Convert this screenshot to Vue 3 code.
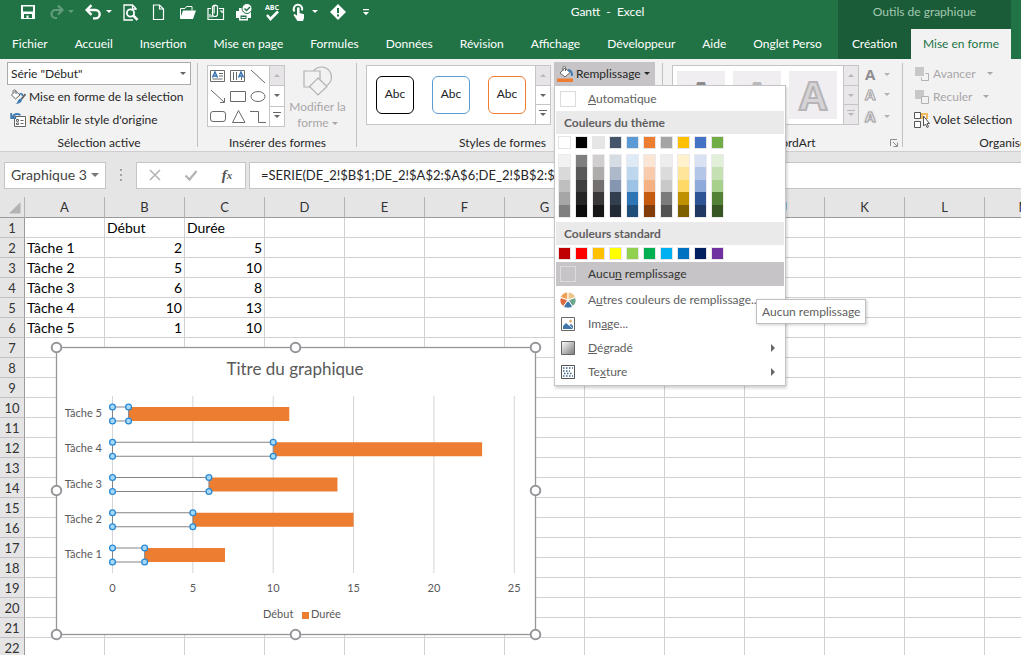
<script setup>
import { ref } from 'vue'

const tabs = ['Fichier', 'Accueil', 'Insertion', 'Mise en page', 'Formules', 'Données', 'Révision', 'Affichage', 'Développeur', 'Aide', 'Onglet Perso']

const formula = ref('=SERIE(DE_2!$B$1;DE_2!$A$2:$A$6;DE_2!$B$2:$B$6;1)')
const nameBox = ref('Graphique 3')
const element = ref('Série "Début"')

const columns = ['A', 'B', 'C', 'D', 'E', 'F', 'G', 'H', 'I', 'J', 'K', 'L', 'M']
const tasks = [
  { name: 'Tâche 1', start: 2, length: 5 },
  { name: 'Tâche 2', start: 5, length: 10 },
  { name: 'Tâche 3', start: 6, length: 8 },
  { name: 'Tâche 4', start: 10, length: 13 },
  { name: 'Tâche 5', start: 1, length: 10 }
]
const rows = Array.from({ length: 24 }, (_, i) => {
  if (i === 0) return ['', 'Début', 'Durée']
  const t = tasks[i - 1]
  return t ? [t.name, t.start, t.length] : []
})

const themeColors = ['#ffffff', '#000000', '#e7e6e6', '#44546a', '#5b9bd5', '#ed7d31', '#a5a5a5', '#ffc000', '#4472c4', '#70ad47']
const shades = [
  ['#f2f2f2', '#d9d9d9', '#bfbfbf', '#a6a6a6', '#7f7f7f'],
  ['#7f7f7f', '#595959', '#3f3f3f', '#262626', '#0c0c0c'],
  ['#d0cece', '#aeabab', '#757070', '#3a3838', '#171616'],
  ['#d6dce4', '#adb9ca', '#8496b0', '#323f4f', '#222a35'],
  ['#deebf6', '#bdd7ee', '#9cc3e5', '#2e75b5', '#1e4e79'],
  ['#fbe5d5', '#f7cbac', '#f4b183', '#c55a11', '#833c0b'],
  ['#ededed', '#dbdbdb', '#c9c9c9', '#7b7b7b', '#525252'],
  ['#fff2cc', '#fee599', '#ffd965', '#bf9000', '#7f6000'],
  ['#d9e2f3', '#b4c6e7', '#8eaadb', '#2f5496', '#1f3864'],
  ['#e2efd9', '#c5e0b3', '#a8d08d', '#538135', '#375623']
]
const standardColors = ['#c00000', '#ff0000', '#ffc000', '#ffff00', '#92d050', '#00b050', '#00b0f0', '#0070c0', '#002060', '#7030a0']

const plot = { left: 66.5, unit: 16.07, top: 59, bottom: 236, step: 35.25, first: 218 }
const px = v => plot.left + v * plot.unit
const bars = tasks.map((t, i) => ({
  ...t,
  y: plot.first - i * plot.step,
  x0: px(0),
  x1: px(t.start),
  x2: px(t.start + t.length)
}))
const ticks = [0, 5, 10, 15, 20, 25]
const grips = [[10.5, 10.5], [249.5, 10.5], [489.5, 10.5], [10.5, 153.5], [489.5, 153.5], [10.5, 297.5], [249.5, 297.5], [489.5, 297.5]]
</script>

<template>
  <div class="app">
    <header class="top">
      <div class="titlebar">
        <div class="qat">
          <button class="q" aria-label="Enregistrer">
            <svg viewBox="0 0 20 20"><path fill="#fff" fill-rule="evenodd" d="M3 3h14v14H3zM5 4.500v5h10v-5zM6 12v4h2.500v-2.500h2V16H14v-4z" /></svg>
          </button>
          <span class="split dim">
            <button class="q" aria-label="Rétablir">
              <svg viewBox="0 0 20 20"><path fill="none" stroke="#fff" stroke-width="2.200" d="M16 8H9.500a4 4 0 0 0 0 8H11M12 3.500 16.500 8 12 12.500" /></svg>
            </button>
            <i class="caret"></i>
          </span>
          <span class="split">
            <button class="q" aria-label="Annuler">
              <svg viewBox="0 0 20 20"><path fill="none" stroke="#fff" stroke-width="2.400" d="M3 8h8.500a4.200 4.200 0 0 1 0 8.400H9M7.500 3.200 2.700 8l4.800 4.800" /></svg>
            </button>
            <i class="caret"></i>
          </span>
          <button class="q" aria-label="Aperçu">
            <svg viewBox="0 0 20 20"><g fill="none" stroke="#fff" stroke-width="1.300"><path d="M14 8V6.500L10.500 3H2v15h9M10.500 3v4H14" /><circle cx="8.500" cy="11" r="3.600" stroke-width="1.800" /><path stroke-width="2.600" d="m11.200 13.500 4.300 4.300" /></g></svg>
          </button>
          <button class="q" aria-label="Nouveau">
            <svg viewBox="0 0 20 20"><path fill="none" stroke="#fff" stroke-width="1.200" d="M3.500 3h6l4 4v10.500h-10zM9.500 3v4h4" /></svg>
          </button>
          <button class="q" aria-label="Ouvrir">
            <svg viewBox="0 0 20 20"><path fill="none" stroke="#fff" d="M2.500 16V6.500H7L8.500 4.500H14v4" /><path fill="#fff" d="M5 8.500h13L15 17H2z" /></svg>
          </button>
          <button class="q" aria-label="Courrier">
            <svg viewBox="0 0 20 20"><g fill="none" stroke="#fff" stroke-width="1.200"><path d="M5 6.500H2v11h15.500v-11H13M4 12v3.500M6 13v2.500M14 9h2v2" /><path d="M6.500 7v5a2.500 2.500 0 0 0 5 0V5a1.700 1.700 0 0 0-3.400 0v6.500M11.500 6V4.500a3 3 0 0 0-5 0V8" /></g></svg>
          </button>
          <button class="q" aria-label="Impression rapide">
            <svg viewBox="0 0 20 20"><path fill="#fff" d="M2 9h3V6h4v4h8v6h-3v2.500H5V16H2z" /><path fill="#217346" d="M6.500 13.500h6V17h-6z" /><path stroke="#fff" d="M7.500 15.500h4" /><circle cx="13" cy="6.500" r="5" fill="#fff" stroke="#217346" /><path fill="none" stroke="#217346" stroke-width="1.500" d="m10.500 6.500 2 2L16 5" /></svg>
          </button>
          <button class="q" aria-label="Orthographe">
            <svg viewBox="0 0 20 20"><text x="10" y="7.500" text-anchor="middle" class="abc">ABC</text><path fill="none" stroke="#fff" stroke-width="2.600" d="m5 13 3.500 4 7.500-7.500" /></svg>
          </button>
          <span class="split">
            <button class="q" aria-label="Mode tactile">
              <svg viewBox="0 0 20 20"><path fill="none" stroke="#fff" stroke-width="2" d="M4.500 9.500a4.300 4.300 0 1 1 7.500-1" /><path fill="#fff" d="M7 6.500a1.300 1.300 0 0 1 2.600 0V11l4.400 1.200V16l-1 3H7.500L3.500 13l1-1L7 13.500z" /></svg>
            </button>
            <i class="caret"></i>
          </span>
          <button class="q" aria-label="Alerte">
            <svg viewBox="0 0 20 20"><path fill="#fff" d="m10 2 8 8-8 8-8-8z" /><path stroke="#217346" stroke-width="2" d="M10 6v5M10 12.500v2" /></svg>
          </button>
          <button class="q" aria-label="Personnaliser la barre">
            <svg viewBox="0 0 20 20"><path fill="#fff" d="M7 7h6v1.300H7zM7 10h6l-3 3.200z" /></svg>
          </button>
        </div>
        <div class="doc">Gantt&nbsp; -&nbsp; Excel</div>
      </div>
      <nav class="tabs">
        <button v-for="t in tabs" :key="t" class="tab">{{ t }}</button>
      </nav>
      <div class="context">
        <div class="context-title">Outils de graphique</div>
        <div class="context-tabs">
          <button class="tab">Création</button>
          <button class="tab active">Mise en forme</button>
        </div>
      </div>
    </header>

    <section class="ribbon">
      <div class="group g-select">
        <div class="body">
          <label class="combo">
            <select v-model="element" aria-label="Élément du graphique"><option>Série "Début"</option></select>
            <i class="caret"></i>
          </label>
          <button class="cmd">
            <svg viewBox="0 0 16 16"><path fill="#fff" stroke="#666" d="m1.500 6 4-4 4.500 4-4.500 4zM3 4V2.500a1.500 1.500 0 0 1 3 0V5" /><path fill="none" stroke="#3e7cb1" stroke-width="1.600" d="M9.500 5q3-1 3 2" /><path stroke="#666" stroke-width="2" d="m15.500 5-4 5" /><path fill="#3e7cb1" d="M12 9.500q.5 5-6.500 5.500 2-1 2.500-3.500 1.500-2.500 4-2z" /></svg>
            Mise en forme de la sélection
          </button>
          <button class="cmd">
            <svg viewBox="0 0 16 16"><path fill="#fff" stroke="#666" d="M4.500 4.500h11v10h-11z" /><path stroke="#666" d="M10.500 8.500h3M10.500 11.500h3" /><path fill="none" stroke="#666" d="M6.500 7.500h2v1.800h-2zM6.500 11h2v1.500h-2z" /><path fill="none" stroke="#3e7cb1" stroke-width="1.800" d="M2 5.500Q5 0 10.500 3M1.200 1v5h5" /></svg>
            Rétablir le style d'origine
          </button>
        </div>
        <div class="label">Sélection active</div>
      </div>

      <div class="group g-shapes">
        <div class="body row">
          <div class="gallery">
            <svg class="shapes" viewBox="0 0 61 60"><g fill="none" stroke="#6a6a6a"><path d="M2.500 4.500h14v11h-14zM22.500 4.500h14v11h-14zM11 7.500h4M11 10h4M4.500 13h10M25.500 6v8M28.500 6v8M33.500 11v3" /><path d="m43 4 14 13M3 24l13 12M16.500 32v4.500h-4.500" /><path d="M22.500 25.500h15v10h-15z" /><ellipse cx="50" cy="30.500" rx="7" ry="5" /><rect x="2.500" y="45.500" width="15" height="10" rx="2.500" /><path d="M30.500 44.500 37 56.500H24.500zM42 45.500h8.500v11H58" /></g><g fill="none" stroke="#3673b0" stroke-width="1.500"><path d="M4.500 11.500 7 6l2.500 5.500M5.500 10h3M30.500 11.500 33 6l2.500 5.500M31.500 10h3" /></g></svg>
            <div class="scroller"><button class="off" aria-label="Haut"><i class="up"></i></button><button aria-label="Bas"><i class="caret"></i></button><button aria-label="Autres"><i class="caret bar"></i></button></div>
          </div>
          <button class="big">
            <svg viewBox="0 0 30 30"><g fill="#f3f2f3" stroke="#b3b1b3" stroke-width="1.200"><circle cx="18.500" cy="11" r="10" /><path d="M1 5h16v16H1z" /><path d="m15 12 9 8.500-9 8.500-8.500-8.500z" /></g></svg>
            <span>Modifier la<br>forme <i class="caret"></i></span>
          </button>
        </div>
        <div class="label">Insérer des formes</div>
      </div>

      <div class="group g-styles">
        <div class="body row">
          <div class="gallery tiles">
            <button class="tile k">Abc</button>
            <button class="tile b">Abc</button>
            <button class="tile o">Abc</button>
            <div class="scroller"><button class="off" aria-label="Haut"><i class="up"></i></button><button aria-label="Bas"><i class="caret"></i></button><button aria-label="Autres"><i class="caret bar"></i></button></div>
          </div>
          <div class="fill">
            <button class="fill-btn">
              <svg viewBox="0 0 16 16"><path fill="#ed7d31" d="M0 12.500h16V16H0z" /><path fill="#fff" stroke="#666" d="m3 7 5-5 5 4.500L8 11zM6 5V1.500a1 1 0 0 1 2.500 0V5" /><path fill="none" stroke="#3e7cb1" stroke-width="2" d="M11 4q4 0 4 6" /></svg>
              Remplissage<i class="caret"></i>
            </button>
            <div class="menu">
              <button class="item"><i class="box"></i><span><u>A</u>utomatique</span></button>
              <div class="head">Couleurs du thème</div>
              <div class="swatches">
                <button v-for="c in themeColors" :key="c" class="sw" :style="{ background: c }" :aria-label="c"></button>
              </div>
              <div class="swatches shades">
                <div v-for="(col, i) in shades" :key="i" class="shade">
                  <button v-for="c in col" :key="c" :style="{ background: c }" :aria-label="c"></button>
                </div>
              </div>
              <div class="head">Couleurs standard</div>
              <div class="swatches">
                <button v-for="c in standardColors" :key="c" class="sw" :style="{ background: c }" :aria-label="c"></button>
              </div>
              <button class="item on"><i class="box"></i><span>Aucu<u>n</u> remplissage</span></button>
              <button class="item">
                <svg viewBox="0 0 16 16"><g stroke="#fff"><path fill="#f0a052" d="M8 8V0a8 8 0 0 0-7.600 5.500z" /><path fill="#ecc58a" d="M8 8V0a8 8 0 0 1 7.600 5.500z" /><path fill="#6ba58b" d="m8 8 7.600-2.500A8 8 0 0 1 12.700 14.500z" /><path fill="#3f76a8" d="m8 8 4.700 6.500a8 8 0 0 1-9.400 0z" /><path fill="#dd6a3f" d="m8 8-4.700 6.500A8 8 0 0 1 .4 5.500z" /></g><circle cx="8" cy="8" r="1.500" fill="#fff" /></svg>
                <span>A<u>u</u>tres couleurs de remplissage...</span>
              </button>
              <button class="item">
                <svg viewBox="0 0 16 16"><path fill="#fff" stroke="#666" d="M1.500 1.500h13v13h-13z" /><circle cx="10.500" cy="5" r="1.500" fill="#ecb57c" /><path fill="#3f76a8" d="M3 13V10l3-3 7 6zM9.500 9l1.500-1 2 2v2.500z" /></svg>
                <span>Im<u>a</u>ge...</span>
              </button>
              <button class="item">
                <svg viewBox="0 0 16 16"><defs><linearGradient id="grad" x2="1" y2="1"><stop stop-color="#fff" /><stop offset="1" stop-color="#777" /></linearGradient></defs><path fill="url(#grad)" stroke="#666" d="M1.500 1.500h13v13h-13z" /></svg>
                <span><u>D</u>égradé</span><i class="sub"></i>
              </button>
              <button class="item">
                <svg viewBox="0 0 16 16"><path fill="#fff" stroke="#555" d="M1.500 1.500h13v13h-13z" /><path stroke="#3f6690" stroke-width="1.500" stroke-dasharray="1.500 1.500" d="M3 4h10M3 7h7M4 9.500h9M3 12h10" /></svg>
                <span>Te<u>x</u>ture</span><i class="sub"></i>
              </button>
              <div class="tip" role="tooltip">Aucun remplissage</div>
            </div>
          </div>
        </div>
        <div class="label launch">Styles de formes</div>
      </div>

      <div class="group g-art">
        <div class="body row">
          <div class="gallery art">
            <button v-for="n in 3" :key="n" class="art-tile" :class="'a' + n">A</button>
            <div class="scroller dis"><button aria-label="Haut"><i class="up"></i></button><button aria-label="Bas"><i class="caret"></i></button><button aria-label="Autres"><i class="caret bar"></i></button></div>
          </div>
          <div class="letters">
            <button class="solid">A<i class="caret"></i></button>
            <button class="hollow">A<i class="caret"></i></button>
            <button class="hollow glow">A<i class="caret"></i></button>
          </div>
        </div>
        <div class="label launch">Styles WordArt
          <svg class="launcher" viewBox="0 0 8 8"><path fill="none" stroke="#8c8a8c" d="M.5 7V.5H7M3 3l4 4M7.500 3.500v4h-4" /></svg>
        </div>
      </div>

      <div class="group g-arrange">
        <div class="body">
          <button class="cmd off">
            <svg viewBox="0 0 16 16"><path fill="#c9c7c9" d="M1 1h9v9H1z" /><path fill="none" stroke="#b3b1b3" d="M11.500 7.500h3v7h-7v-3" /></svg>
            Avancer<i class="caret"></i>
          </button>
          <button class="cmd off">
            <svg viewBox="0 0 16 16"><path fill="#c9c7c9" d="M1 1h9v9H1z" /><path fill="#f3f2f3" stroke="#b3b1b3" d="M7.500 7.500h7v7h-7z" /></svg>
            Reculer<i class="caret"></i>
          </button>
          <button class="cmd">
            <svg viewBox="0 0 16 16"><path fill="#fff" stroke="#555" d="M.5.500h6v6h-6zM.5 9.500h6v6h-6z" /><path fill="none" stroke="#f0b95a" stroke-width="2" d="M8 7V2h5v5" /><path fill="#fff" stroke="#555" d="M9.500 4v10l2-2 1.500 3.500 1.500-.7-1.500-3.300h2.500z" /></svg>
            Volet Sélection
          </button>
        </div>
        <div class="label">Organiser</div>
      </div>
    </section>

    <section class="formula">
      <label class="name"><input v-model="nameBox" aria-label="Zone Nom"><i class="caret"></i></label>
      <span class="dots"></span>
      <div class="fx">
        <button aria-label="Annuler"><svg viewBox="0 0 14 14"><path stroke="#b5b3b5" stroke-width="1.600" d="m2 2 10 10M12 2 2 12" /></svg></button>
        <button aria-label="Entrer"><svg viewBox="0 0 14 14"><path fill="none" stroke="#b5b3b5" stroke-width="2.200" d="m1.500 7.500 4 4 7-8.500" /></svg></button>
        <button class="fn" aria-label="Insérer une fonction">f<small>x</small></button>
      </div>
      <input v-model="formula" class="bar-input" aria-label="Barre de formule">
    </section>

    <main class="sheet">
      <table>
        <thead>
          <tr><th class="corner"><svg viewBox="0 0 24 20"><path fill="#b4b2b4" d="M20.500 5v11.500H9z" /></svg></th><th v-for="c in columns" :key="c">{{ c }}</th></tr>
        </thead>
        <tbody>
          <tr v-for="(r, i) in rows" :key="i">
            <th>{{ i + 1 }}</th>
            <td v-for="(c, j) in columns" :key="c" :class="{ num: typeof r[j] === 'number' }">{{ r[j] }}</td>
          </tr>
        </tbody>
      </table>

      <svg class="chart" viewBox="0 0 500 308" role="img" aria-label="Titre du graphique">
        <rect x="10.500" y="10.500" width="479" height="287" fill="#fff" stroke="#97959a" stroke-width="1.300" />
        <text x="249" y="38" text-anchor="middle" class="c-title">Titre du graphique</text>
        <g v-for="t in ticks" :key="t">
          <line :x1="px(t)" :x2="px(t)" :y1="plot.top" :y2="plot.bottom" stroke="#d6d4d6" />
          <text :x="px(t)" y="255" text-anchor="middle">{{ t }}</text>
        </g>
        <g v-for="b in bars" :key="b.name">
          <text x="56" :y="b.y + 3" text-anchor="end">{{ b.name }}</text>
          <rect :x="b.x1" :y="b.y - 7" :width="b.x2 - b.x1" height="14" fill="#ed7d31" />
          <rect :x="b.x0" :y="b.y - 7" :width="b.x1 - b.x0" height="14" fill="#fff" stroke="#858387" />
          <g fill="#a6d8f7" stroke="#2a8ad4" stroke-width="1.300">
            <circle :cx="b.x0" :cy="b.y - 7" r="2.900" /><circle :cx="b.x1" :cy="b.y - 7" r="2.900" />
            <circle :cx="b.x0" :cy="b.y + 7" r="2.900" /><circle :cx="b.x1" :cy="b.y + 7" r="2.900" />
          </g>
        </g>
        <text x="217" y="281">Début</text>
        <rect x="256" y="275" width="7" height="7" fill="#ed7d31" />
        <text x="265" y="281">Durée</text>
        <circle v-for="(g, i) in grips" :key="i" :cx="g[0]" :cy="g[1]" r="4.800" fill="#fff" stroke="#97959a" stroke-width="2" />
      </svg>
    </main>
  </div>
</template>

<style>
body { margin: 0; overflow: hidden; }
</style>

<style scoped>
.app { height: 100vh; display: flex; flex-direction: column; overflow: hidden; background: #e6e5e6; color: #262626; font: 12px/16px Lato, "Open Sans", sans-serif; }
* { box-sizing: border-box; }
button, input, select { font: inherit; color: inherit; margin: 0; padding: 0; border: 0; background: none; border-radius: 0; outline: 0; }
button { white-space: nowrap; }
svg { display: block; flex: none; }
.caret { flex: none; display: inline-block; border: solid transparent; border-width: 3px 3px 0; border-top-color: currentColor; }
.up { display: inline-block; border: solid transparent; border-width: 0 3px 3px; border-bottom-color: currentColor; }

.top { flex: none; display: grid; grid-template-columns: minmax(0, 1fr) 173px; grid-template-rows: 29px 30px; padding-right: 10px; background: #217346; color: #fff; position: relative; }
.titlebar { display: flex; align-items: center; padding: 0 0 6px 18px; }
.qat { display: flex; gap: 8px; }
.q { width: 20px; height: 20px; }
.q svg { width: 20px; height: 20px; }
.abc { font: bold 7px "Open Sans", sans-serif; fill: #fff; }
.split { display: flex; align-items: center; gap: 2px; width: 30px; }
.dim { opacity: .3; }
.doc { position: absolute; left: 0; right: 0; text-align: center; padding-left: 194px; pointer-events: none; }
.tabs { grid-row: 2; display: flex; gap: 1px; }
.tab { padding: 0 13px; height: 30px; }
.tabs .tab:first-child { padding-left: 12px; }
.context { grid-column: 2; grid-row: 1 / 3; background: #1a5c37; display: flex; flex-direction: column; justify-content: space-between; }
.context-title { line-height: 23px; text-align: center; color: #a3c9b2; }
.context-tabs { display: flex; }
.context .tab { flex: 1 0 auto; }
.context .active { background: #f3f2f3; color: #217346; flex: none; padding: 0 12px; }

.ribbon { flex: none; display: flex; height: 93px; background: #f3f2f3; border-bottom: 1px solid #cfcdcf; position: relative; z-index: 2; }
.group { flex: none; display: flex; flex-direction: column; justify-content: space-between; padding-top: 3px; position: relative; }
.group:not(:last-child)::after { content: ""; position: absolute; right: 0; top: 4px; bottom: 4px; border-right: 1px solid #c2c0c2; }
.body { display: flex; flex-direction: column; }
.row { flex-direction: row; }
.label { text-align: center; height: 17px; line-height: 17px; white-space: nowrap; }
.launch { padding-right: 15px; position: relative; }
.launcher { position: absolute; right: 5px; top: 5px; width: 8px; height: 8px; }
.g-select { width: 198px; }
.g-select .body { padding: 0 7px; }
.combo { display: flex; align-items: center; position: relative; }
.combo select { appearance: none; width: 100%; height: 23px; border: 1px solid #acaaac; background: #fff; padding-left: 3px; }
.combo .caret { position: absolute; right: 5px; color: #666; }
.cmd { display: flex; align-items: center; gap: 3px; height: 23px; padding-left: 3px; text-align: left; }
.cmd svg { width: 16px; height: 16px; }
.off { color: #a8a6a8; }

.g-shapes { width: 159px; }
.g-shapes .body { padding: 3px 7px 0 9px; }
.gallery { display: flex; border: 1px solid #c6c4c6; background: #fff; height: 62px; }
.shapes { width: 61px; height: 60px; }
.scroller { flex: none; width: 15px; display: flex; flex-direction: column; border-left: 1px solid #c6c4c6; color: #666; }
.scroller button { flex: 1; display: flex; align-items: center; justify-content: center; }
.scroller button + button { border-top: 1px solid #c6c4c6; }
.scroller .off { background: #e6e4e6; color: #b8b6b8; }
.scroller.dis { background: #e9e7e9; color: #b8b6b8; }
.bar { position: relative; }
.bar::before { content: ""; position: absolute; left: -4px; top: -6px; width: 8px; border-top: 1px solid currentColor; }
.big { flex: 1; display: flex; flex-direction: column; align-items: center; color: #a8a6a8; gap: 3px; }
.big svg { width: 30px; height: 30px; margin-top: 1px; }
.big .caret { vertical-align: 2px; }

.g-styles { width: 306px; z-index: 2; }
.g-styles .body { padding-left: 9px; }
.tiles { width: 185px; height: 60px; margin-top: 3px; padding-left: 9px; align-items: center; }
.tiles .scroller { height: 58px; margin-left: auto; }
.tile { flex: none; width: 38px; height: 38px; border: 1px solid; border-radius: 6px; padding-bottom: 3px; color: #222; }
.tile + .tile { margin-left: 18px; }
.k { border-color: #000; }
.b { border-color: #5b9bd5; }
.o { border-color: #ed7d31; }
.fill { position: relative; z-index: 1; margin-left: 3px; }
.fill-btn { display: flex; align-items: center; gap: 3px; width: 101px; height: 23px; background: #c6c4c6; padding-left: 3px; }
.fill-btn svg { width: 16px; height: 16px; }
.menu { position: absolute; left: 0; top: 23px; width: 232px; padding: 1px; background: #fff; border: 1px solid #c6c4c6; box-shadow: 1px 2px 3px rgba(0, 0, 0, .2); color: #606060; }
.item { display: flex; align-items: center; gap: 12px; width: 100%; height: 24px; padding: 0 9px 0 4px; text-align: left; }
.item svg, .box { width: 16px; height: 16px; flex: none; }
.box { border: 1px solid #dddbdd; }
.on { background: #c6c4c6; color: #333; margin-bottom: 2px; }
.sub { margin-left: auto; border: solid transparent; border-width: 4px 0 4px 4px; border-left-color: #666; }
.head { height: 23px; line-height: 23px; padding-left: 8px; background: #ebeaeb; font-weight: bold; }
.swatches { display: flex; gap: 4px; padding: 2px 0 2px 2px; }
.sw { width: 13px; height: 13px; border: 1px solid #e6e4e6; }
.shades { padding: 3px 0 4px 2px; }
.shade { display: flex; flex-direction: column; width: 13px; height: 64px; border: 1px solid #eceaec; }
.shade button { flex: 1; }
.tip { position: absolute; left: 201px; top: 213px; height: 25px; line-height: 23px; padding: 0 5px; background: #fff; border: 1px solid #c0bec0; box-shadow: 1px 1px 3px rgba(0, 0, 0, .2); white-space: nowrap; }

.g-art { width: 240px; }
.g-art .body { padding: 3px 0 0 9px; }
.art { height: 60px; padding-left: 4px; align-items: center; gap: 8px; }
.art .scroller { height: 58px; margin-left: -2px; }
.art-tile { width: 48px; height: 48px; background: #f0eef0; font: bold 40px/48px "Open Sans", sans-serif; color: #d6d4d6; -webkit-text-stroke: 2px #b6b4b6; }
.a1 { color: #8c8a8c; -webkit-text-stroke: 0; }
.a2 { color: #bbb9bb; -webkit-text-stroke: 0; }
.letters { padding-left: 6px; display: flex; flex-direction: column; color: #8f8d8f; }
.letters button { display: flex; align-items: center; gap: 9px; height: 22px; font: bold 15px/18px "Open Sans", sans-serif; }
.letters .caret { color: #b3b1b3; }
.letters button:first-child { height: 18px; }
.hollow { color: #f3f2f3; -webkit-text-stroke: 1px #a3a1a3; }
.glow { text-shadow: 0 0 3px #bbb; }

.g-arrange { width: 204px; }
.g-arrange .body { padding-left: 8px; align-items: flex-start; }
.cmd .caret { margin-left: 8px; }

.formula { flex: none; display: flex; align-items: center; height: 45px; padding: 1px 0 0 4px; }
.name { width: 102px; height: 27px; display: flex; align-items: center; background: #fff; border: 1px solid #c6c4c6; padding: 0 6px; color: #444; font-size: 14px; }
.name input { flex: 1; min-width: 0; }
.name .caret { border-width: 4px 4px 0; color: #777; }
.dots { width: 2px; height: 12px; margin: 0 14px; background: repeating-linear-gradient(#a3a1a3 0 2px, transparent 2px 5px); }
.fx { width: 110px; height: 27px; display: flex; background: #fff; border: 1px solid #c6c4c6; }
.fx button { flex: 1; display: flex; align-items: center; justify-content: center; }
.fx svg { width: 14px; height: 14px; }
.fn { font: italic bold 15px "Liberation Serif", serif; color: #555; }
.fn small { font-size: 11px; }
.bar-input { flex: 1; min-width: 0; height: 27px; margin-left: 3px; background: #fff; border: 1px solid #c6c4c6; border-right: 0; padding-left: 11px; font-size: 13px; }

.sheet { flex: 1; min-height: 0; position: relative; overflow: hidden; background: #fff; font-size: 14px; }
table { border-collapse: separate; border-spacing: 0; table-layout: fixed; width: 1065px; color: #000; }
th, td { height: 20px; padding: 0 2px; border: solid #d2d0d2; border-width: 0 1px 1px 0; line-height: 18px; white-space: nowrap; }
th { background: #e6e5e6; font-weight: normal; font-size: 13px; color: #333; }
thead th { height: 21px; border-color: #b4b2b4; border-bottom-color: #9c9a9c; }
tbody th { border-color: #c2c0c2; border-right-color: #9c9a9c; }
.corner { width: 25px; padding: 0; }
.corner svg { width: 24px; height: 20px; }
.num { text-align: right; }
.chart { position: absolute; left: 46px; top: 140px; width: 500px; height: 308px; }
.chart text { font-size: 11px; fill: #595959; }
.chart .c-title { font-size: 17px; }
</style>
